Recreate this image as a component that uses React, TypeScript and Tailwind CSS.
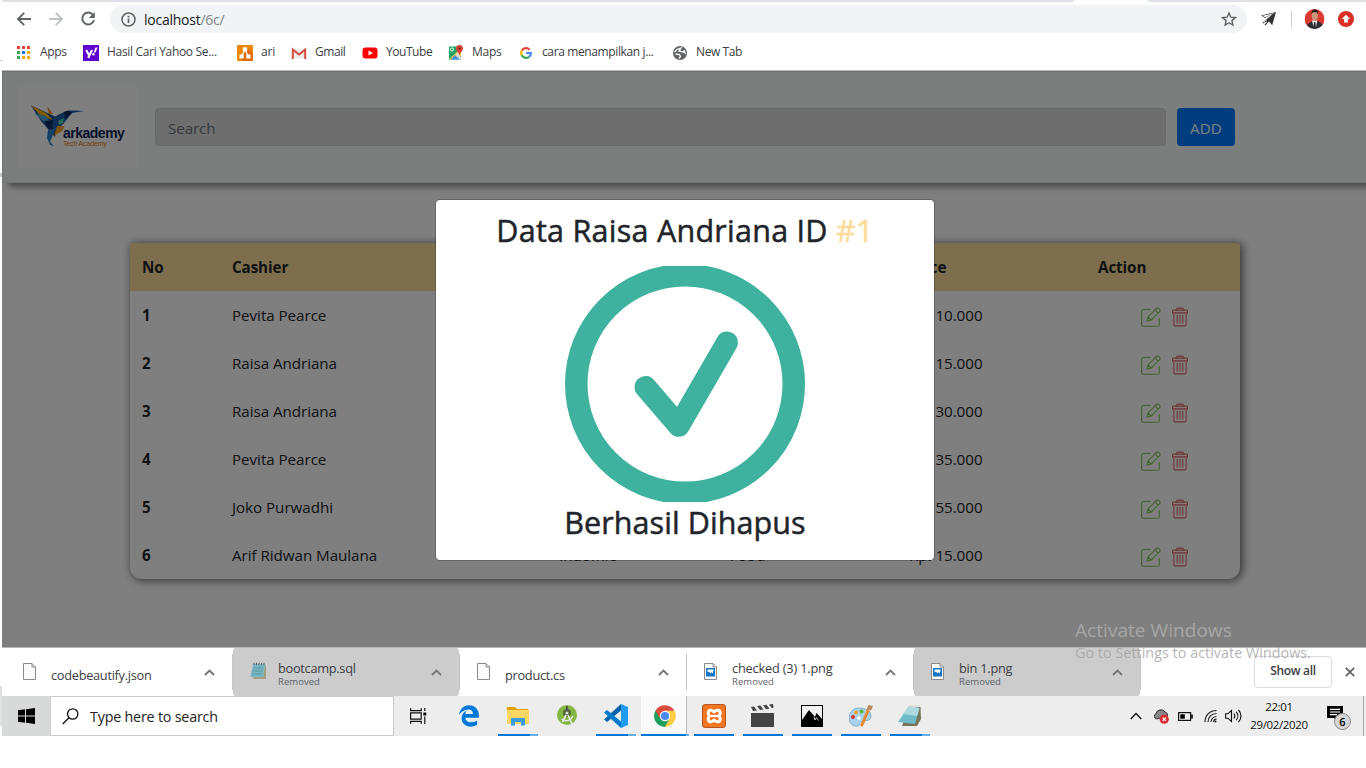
import React from "react";
import { FaEdgeLegacy } from "react-icons/fa6";

type Kid = { children?: React.ReactNode };

/* ---------- browser toolbar ---------- */

function Toolbar() {
  return (
    <div className="flex h-[35px] shrink-0 items-center pb-px pl-[14px]">
      <svg width="16" height="16" viewBox="0 0 16 16" fill="none" stroke="#5f6368" strokeWidth="1.9">
        <path d="M15 8H2.2M8.2 1.8 2 8l6.200 6.200" />
      </svg>
      <svg className="ml-4" width="16" height="16" viewBox="0 0 16 16" fill="none" stroke="#bdc1c6" strokeWidth="1.9">
        <path d="M1 8h12.800M7.800 1.800 14 8l-6.200 6.200" />
      </svg>
      <svg className="ml-4" width="16" height="16" viewBox="0 0 16 16" fill="none">
        <path d="M13.300 4.200A6 6 0 1 0 14 9.300" stroke="#5f6368" strokeWidth="2" />
        <path d="M14.800 1v6H8.800z" fill="#5f6368" />
      </svg>
      <div className="ml-[14px] flex h-7 w-[1137px] items-center rounded-full bg-[#f1f3f4] pl-[11px]">
        <svg width="15" height="15" viewBox="0 0 15 15" fill="none" stroke="#5f6368" strokeWidth="1.500">
          <circle cx="7.500" cy="7.500" r="6.500" />
          <path d="M7.500 6.500v4.500M7.500 3.800v1.600" strokeWidth="1.700" />
        </svg>
        <span className="ml-2 pt-px text-[14px] tracking-[-0.25px] text-[#202124]">
          localhost<span className="text-[#80868b]">/6c/</span>
        </span>
        <svg className="ml-auto mr-[10px]" width="16" height="16" viewBox="0 0 16 16" fill="none" stroke="#5f6368" strokeWidth="1.400">
          <path d="M8 2l1.800 4.200 4.600.4-3.500 3 1 4.500L8 11.700l-3.900 2.400 1-4.500-3.500-3 4.600-.4z" />
        </svg>
      </div>
      <svg className="ml-[13px]" width="17" height="16" viewBox="0 0 17 16">
        <path d="M16 1 1 4.500 5 7l8-4.200L6.200 8.500l.6 4L9 10.500l3.200 3.700z" fill="#333" />
        <path d="M15 2 2.500 4.800 5 6.200z" fill="#fff" />
        <path d="M5 9.500l1 1.500M3 12l1.500-1M5 14l2-2" stroke="#333" strokeWidth="1.100" />
      </svg>
      <div className="ml-[14px] h-4 w-px bg-[#c8cbcf]" />
      <svg className="ml-3" width="21" height="20" viewBox="0 0 20 20">
        <defs>
          <clipPath id="face"><circle cx="10" cy="10" r="10" /></clipPath>
        </defs>
        <g clipPath="url(#face)">
          <rect width="20" height="20" fill="#db3a33" />
          <path d="M3 20v-5l5-3h5l5 3v5z" fill="#2b2f36" />
          <path d="M7.300 11.500h5.500L11.500 18h-2z" fill="#eee" />
          <path d="M9.600 13h1.200l.6 5h-2.200z" fill="#222" />
          <ellipse cx="10.300" cy="6.800" rx="3.100" ry="4.600" fill="#c9987c" />
          <path d="M7 5.500C6.800 2 8 .6 10.300.6S14 2 13.600 5.500l-1-2.200H8z" fill="#1d1a1a" />
        </g>
      </svg>
      <svg className="ml-[13px]" width="16" height="16" viewBox="0 0 16 16">
        <circle cx="8" cy="8" r="8" fill="#d93025" />
        <path d="M8 3.800 12.200 8H10v3.500H6V8H3.800z" fill="#fff" />
      </svg>
    </div>
  );
}

function Mark({ width, icon, label, tracking }: { width: string; icon: React.ReactNode; label: string; tracking: string }) {
  return (
    <div className={`flex h-full shrink-0 items-center ${width}`}>
      <div className="flex w-6 shrink-0 items-center">{icon}</div>
      <span className={`whitespace-nowrap pb-0.5 text-[12px] text-[#3c4043] ${tracking}`}>{label}</span>
    </div>
  );
}

function Bookmarks() {
  const dots = ["#ea4335", "#ea4335", "#ea4335", "#34a853", "#1a73e8", "#fbaa05", "#34a853", "#fbaa05", "#fbaa05"];
  return (
    <div className="flex h-8 shrink-0 items-center pb-px pl-[15px]">
      <Mark
        width="w-[66px]"
        tracking="tracking-[-0.3px] -ml-px"
        label="Apps"
        icon={
          <svg width="13" height="13" viewBox="0 0 13 13">
            {dots.map((c, i) => (
              <rect key={i} x={(i % 3) * 5} y={Math.floor(i / 3) * 5} width="3" height="3" fill={c} />
            ))}
          </svg>
        }
      />
      <Mark
        width="w-[154px]"
        tracking="tracking-[-0.32px]"
        label="Hasil Cari Yahoo Se..."
        icon={
          <svg width="16" height="16" viewBox="0 0 16 16">
            <rect width="16" height="16" fill="#5f01d1" />
            <path d="M3.200 5 6 10.200M9 5l-3.800 8" stroke="#fff" strokeWidth="2.100" fill="none" />
            <path d="M12.500 2.500h2l-2 5h-2z" fill="#fff" />
            <circle cx="10.400" cy="9.300" r="1.200" fill="#fff" />
          </svg>
        }
      />
      <Mark
        width="w-[54px]"
        tracking="tracking-[-0.2px]"
        label="ari"
        icon={
          <svg width="16" height="16" viewBox="0 0 16 16">
            <rect width="16" height="16" rx="1" fill="#f08705" />
            <path d="M10 2 16 8v8H6l-3-3z" fill="#df6c0c" />
            <path d="M8 5 4.700 11M8 5l3.300 6" stroke="#fff" strokeWidth="1.200" />
            <rect x="5.800" y="2.300" width="4.400" height="4" fill="#fff" />
            <rect x="2.500" y="9.500" width="4.200" height="4" fill="#fff" />
            <rect x="9.300" y="9.500" width="4.200" height="4" fill="#fff" />
          </svg>
        }
      />
      <Mark
        width="w-[71px]"
        tracking="tracking-[-0.45px]"
        label="Gmail"
        icon={
          <svg width="16" height="16" viewBox="0 0 16 16">
            <path d="M1.500 3.500h13v10h-13z" fill="#ececec" />
            <path d="M1.800 14V4.500L8 9.500l6.200-5V14" stroke="#d54b3d" strokeWidth="2" fill="none" />
          </svg>
        }
      />
      <Mark
        width="w-[86px]"
        tracking="tracking-[-0.45px]"
        label="YouTube"
        icon={
          <svg width="16" height="16" viewBox="0 0 16 16">
            <rect x=".5" y="2.500" width="15" height="11" rx="3" fill="#f00" />
            <path d="M6.500 5.500v5L11 8z" fill="#fff" />
          </svg>
        }
      />
      <Mark
        width="w-[70px]"
        tracking="tracking-[-0.25px]"
        label="Maps"
        icon={
          <svg width="16" height="16" viewBox="0 0 16 16">
            <path d="M1 1.500h12v13H1z" fill="#1fa463" />
            <path d="M1 14.500 13 3v8z" fill="#f7d046" />
            <path d="M3 14.500 7 10l4.500 4.500z" fill="#4a89f3" />
            <path d="M10 7l4 7.500h-2.500L7.500 10z" fill="#dcdcdc" />
            <circle cx="4" cy="4.500" r="1.600" fill="none" stroke="#fff" strokeWidth=".9" />
            <path d="M11.500 0a3.500 3.500 0 0 1 3.500 3.500C15 6 12 7.500 11.500 10.500 11 7.500 8 6 8 3.500A3.500 3.500 0 0 1 11.500 0z" fill="#dc4437" />
            <circle cx="11.500" cy="3.500" r="1.200" fill="#80271d" />
          </svg>
        }
      />
      <Mark
        width="w-[154px]"
        tracking="tracking-[-0.38px]"
        label="cara menampilkan j..."
        icon={
          <svg className="ml-0.5" width="12" height="12" viewBox="0 0 14 14" fill="none" strokeWidth="2.500">
            <path d="M11.300 3.300A5.700 5.700 0 0 0 2 4.300" stroke="#ea4335" />
            <path d="M2.100 4.200a5.700 5.700 0 0 0 0 5.600" stroke="#fbbc05" />
            <path d="M2 9.700a5.700 5.700 0 0 0 8.600 1.800" stroke="#34a853" />
            <path d="M7.200 7h5.500a5.700 5.700 0 0 1-2 4.400" stroke="#4285f4" />
          </svg>
        }
      />
      <Mark
        width="w-[90px]"
        tracking="tracking-[-0.4px]"
        label="New Tab"
        icon={
          <svg className="ml-px" width="14" height="14" viewBox="0 0 14 14">
            <circle cx="7" cy="7" r="7" fill="#5f6368" />
            <path d="M1.500 6 4 3.500 8 2 6 5l4.500 1 1.500 1-1-3M2.500 8l4 .5 1 2-1.500 2" stroke="#fff" strokeWidth="1.300" fill="none" />
          </svg>
        }
      />
    </div>
  );
}

/* ---------- web page ---------- */

function ArkademyLogo() {
  return (
    <div className="relative h-[84px] w-[120px] shrink-0 bg-white">
      <svg className="absolute left-[11px] top-[19px]" width="58" height="46" viewBox="0 0 58 46">
        <path d="M1 1.500 24 12 29 17 25 33 11 17z" fill="#1d4f91" />
        <path d="M1 1.500 16 9 23 16 11 12z" fill="#ffb400" />
        <path d="M17 2l6 8-4 0z" fill="#ff8a1c" />
        <path d="M4 9l12 3 8 12-10-6z" fill="#4fa5e0" />
        <path d="M14 17l9-1 6 7-7 7z" fill="#0c2f66" />
        <path d="M24 13l12-6 6-.5L54 7l-12 2-8 10-8 8-4-4z" fill="#1d5ea8" />
        <path d="M34 8l5-1.500 3 2.500-7 6z" fill="#0b2b5c" />
        <path d="M28 17l6-3-1 5-4 2z" fill="#55d6b0" />
        <path d="M27 22h8l-3 5-8 5z" fill="#ffa01c" />
        <path d="M18 26l8-2-4 9-2 5 4 4-4-1-3-7z" fill="#2d83cf" />
      </svg>
      <div className="absolute left-[44px] top-[41px] font-['Liberation_Sans',sans-serif] text-[14px] font-bold leading-[14px] tracking-[-0.5px] text-[#0b2257]">
        arkademy
      </div>
      <div className="absolute left-[44px] top-[55px] whitespace-nowrap font-['Liberation_Sans',sans-serif] text-[7px] leading-[7px] tracking-[-0.15px] text-[#e57a10]">
        Tech Academy
      </div>
    </div>
  );
}

function PageHeader() {
  return (
    <header className="relative flex h-[112px] shrink-0 items-center border-y border-l border-[#e2e6e5] bg-[#f7fcfb] pl-4 shadow-[6px_5px_6px_-1px_rgba(0,0,0,0.42)]">
      <ArkademyLogo />
      <div className="ml-4 flex h-[38px] w-[1011px] items-center rounded-[4px] border border-[#ced4da] bg-[#dcdcdc] pl-3 pt-0.5 text-[15.200px] tracking-[-0.1px] text-[#6c757d]">
        Search
      </div>
      <button className="ml-[11px] h-[38px] w-[58px] rounded-[4px] bg-[#007bff] pt-0.5 text-[15.200px] tracking-[0.1px] text-white">ADD</button>
    </header>
  );
}

const cols = "grid grid-cols-[90px_327px_171px_179px_189px_154px] items-center h-12";

function Cell({ children }: Kid) {
  return <div className="whitespace-nowrap pl-3">{children}</div>;
}

const rows = [
  ["1", "Pevita Pearce", "Latte", "Drink", "Rp. 10.000"],
  ["2", "Raisa Andriana", "Cake", "Food", "Rp. 15.000"],
  ["3", "Raisa Andriana", "Gorengan", "Food", "Rp. 30.000"],
  ["4", "Pevita Pearce", "Fried Rice", "Food", "Rp. 35.000"],
  ["5", "Joko Purwadhi", "Steak", "Food", "Rp. 55.000"],
  ["6", "Arif Ridwan Maulana", "Indomie", "Food", "Rp. 15.000"],
];

function RowIcons() {
  return (
    <div className="flex items-center pl-[55px] pt-1">
      <svg width="20" height="20" viewBox="0 0 20 20" fill="none" stroke="#82c35a" strokeWidth="1.100">
        <path d="M10 2.500H2.200A1.500 1.500 0 0 0 .7 4v13.800a1.500 1.500 0 0 0 1.500 1.500H16.800a1.500 1.500 0 0 0 1.500-1.500V11" />
        <path d="M6 14l.9-4L15.300 1.400a1.700 1.700 0 0 1 2.500 0l.8.8a1.700 1.700 0 0 1 0 2.500L10 13.200zM14 2.800l3.300 3.300M7 10l3 3" />
      </svg>
      <svg className="ml-[11px]" width="16" height="20" viewBox="0 0 17 20" fill="none" stroke="#dd6464" strokeWidth="1.150">
        <path d="M5 2.700V1.500A.9.900 0 0 1 5.900.6h5.200a.9.900 0 0 1 .9.900v1.200M.6 5.600V3.700a1 1 0 0 1 1-1h13.800a1 1 0 0 1 1 1v1.900zM2 5.600v12.300a1.500 1.500 0 0 0 1.500 1.500h10a1.500 1.500 0 0 0 1.500-1.500V5.600M5.600 7.500v9.500M8.500 7.500v9.500M11.400 7.500v9.500" />
      </svg>
    </div>
  );
}

function CashierTable() {
  return (
    <div className="ml-32 mt-[60px] w-[1110px] rounded-b-[12px] rounded-t-[4px] bg-white text-[15.200px] text-[#212529] shadow-[2px_1px_9px_1px_rgba(0,0,0,0.55)]">
      <div className={`${cols} rounded-t-[3px] bg-[#fbdc9a] font-bold tracking-[-0.1px]`}>
        <Cell>No</Cell>
        <Cell>Cashier</Cell>
        <Cell />
        <Cell />
        <Cell>Price</Cell>
        <Cell>Action</Cell>
      </div>
      {rows.map((r) => (
        <div key={r[0]} className={`${cols} tracking-[-0.05px]`}>
          <div className="pl-3 font-bold">{r[0]}</div>
          <Cell>{r[1]}</Cell>
          <Cell>{r[2]}</Cell>
          <Cell>{r[3]}</Cell>
          <Cell>{r[4]}</Cell>
          <RowIcons />
        </div>
      ))}
    </div>
  );
}

function DeletedDialog() {
  return (
    <div className="absolute left-[433px] top-[128px] flex h-[362px] w-[500px] flex-col items-center rounded-[5px] border border-black/20 bg-white bg-clip-padding pt-[11px] text-[30.500px] font-medium leading-[38px] text-[#212529] [-webkit-text-stroke:0.5px]">
      <div className="whitespace-nowrap tracking-[0.26px]">
        Data Raisa Andriana ID <span className="text-[#fbdc9a]">#1</span>
      </div>
      <svg className="mt-[17px] shrink-0" width="240" height="236" viewBox="0 2 240 236" fill="none" stroke="#3eb29e" strokeWidth="22.500">
        <circle cx="120" cy="120" r="108.750" />
        <path d="M80.500 123 113.800 161.800 162 78.500" strokeWidth="22" strokeLinecap="round" strokeLinejoin="round" />
      </svg>
      <div className="mt-px whitespace-nowrap tracking-[0.08px]">Berhasil Dihapus</div>
    </div>
  );
}

function WebPage() {
  return (
    <main className="relative flex h-[577px] shrink-0 flex-col overflow-hidden border-t border-[#b5b8bb] bg-white">
      <PageHeader />
      <CashierTable />
      <div className="absolute inset-0 bg-black/50" />
      <DeletedDialog />
    </main>
  );
}

/* ---------- downloads ---------- */

function FileIcon({ picture }: { picture?: boolean }) {
  return (
    <svg width="13" height="17" viewBox="0 0 13 17">
      <path d="M.5.5h8.500l3.500 3.500v12.500H.5z" fill={picture ? "#fff" : "#fafafa"} stroke="#8a8a8a" />
      <path d="M9 .5v3.500h3.500" fill="none" stroke="#8a8a8a" />
      {picture && (
        <>
          <rect x="2" y="5" width="9" height="8.500" fill="#1474c4" />
          <path d="M3.500 6.500h6v1L8.800 10.500 7.500 9 6.500 10.500 5 8.500l-1.500 1z" fill="#fff" />
        </>
      )}
    </svg>
  );
}

function NotepadIcon() {
  return (
    <svg width="17" height="18" viewBox="0 0 17 18">
      <path d="M5 3h11v14H3z" fill="#a59f80" />
      <path d="M3 2h12l-1.500 13H.5z" fill="#79b5c2" />
      <path d="M3 6h10M2.500 9h10M2 12h10" stroke="#5796a5" strokeWidth=".8" />
      <path d="M4 .8v2M6.500.8v2M9 .8v2M11.500.8v2M14 .8v2" stroke="#555" strokeWidth="1" />
    </svg>
  );
}

type DownloadProps = { icon: React.ReactNode; name: string; removed?: boolean; hover?: boolean; width: string; pad: string; tracking: string };

function Download({ icon, name, removed, hover, width, pad, tracking }: DownloadProps) {
  return (
    <div className={`flex h-12 shrink-0 items-center ${width} ${hover ? "rounded-[3px] bg-[#ccc]" : ""}`}>
      <div className={`flex w-full items-center ${pad}`}>
        <div className="mb-[2px] w-7 shrink-0">{icon}</div>
        <div className={removed ? "pt-[3px]" : "pt-[6px]"}>
          <div className={`whitespace-nowrap text-[12.800px] leading-[15px] text-[#3c4043] ${tracking}`}>{name}</div>
          {removed && <div className="text-[9.500px] leading-[11px] tracking-[0.05px] text-[#5f6368]">Removed</div>}
        </div>
        <svg className="ml-auto mr-[17px]" width="11" height="7" viewBox="0 0 11 7" fill="none" stroke="#777" strokeWidth="1.900">
          <path d="M1 6l4.500-4.500L10 6" />
        </svg>
      </div>
    </div>
  );
}

function Sep() {
  return <div className="h-9 w-px shrink-0 bg-[#c4c4c4]" />;
}

function Downloads() {
  return (
    <div className="flex h-[49px] shrink-0 items-center border-t border-[#b9b9b9] bg-white">
      <Download width="w-[230px]" pad="pl-[21px]" tracking="tracking-[-0.3px]" icon={<FileIcon />} name="codebeautify.json" />
      <Sep />
      <Download hover removed width="w-[226px]" pad="pl-[17px]" tracking="tracking-[-0.3px]" icon={<NotepadIcon />} name="bootcamp.sql" />
      <Sep />
      <Download width="w-[226px]" pad="pl-[17px]" tracking="tracking-[-0.3px]" icon={<FileIcon />} name="product.cs" />
      <Sep />
      <Download removed width="w-[226px]" pad="pl-[17px]" tracking="tracking-[-0.2px]" icon={<FileIcon picture />} name="checked (3) 1.png" />
      <Sep />
      <Download hover removed width="w-[226px]" pad="pl-[17px]" tracking="tracking-[-0.25px]" icon={<FileIcon picture />} name="bin 1.png" />
      <Sep />
      <div className="ml-[113px] flex h-8 w-[78px] shrink-0 items-center justify-center rounded-[4px] border border-[#dadce0] pb-0.5 text-[12px] font-semibold tracking-[-0.3px] text-[#3c4043]">
        Show all
      </div>
      <svg className="ml-[13px] shrink-0" width="10" height="10" viewBox="0 0 10 10" stroke="#666" strokeWidth="1.800">
        <path d="M.8.8l8.400 8.400M9.200.8.800 9.200" />
      </svg>
    </div>
  );
}

/* ---------- taskbar ---------- */

function Task({ children, bar, tail }: Kid & { bar?: boolean; tail?: boolean }) {
  return (
    <div className="flex h-10 w-[49px] shrink-0 flex-col items-center">
      <div className="flex h-[38px] items-center justify-center pt-0.5">{children}</div>
      {bar && (
        <div className="flex h-0.5 w-10">
          <div className="grow bg-[#0078d7]" />
          {tail && <div className="w-2 bg-[#66aee7]" />}
        </div>
      )}
    </div>
  );
}

function Taskbar() {
  return (
    <div className="flex h-10 shrink-0 items-stretch bg-[#ededed]">
      <div className="flex w-12 shrink-0 items-center justify-center bg-[#d8dada]">
        <svg width="17" height="16" viewBox="0 0 17 16">
          <path d="M0 2.300 7 1.300v6.200H0zM8 1.200 17 0v7.500H8zM0 8.500h7v6.200l-7-1zM8 8.500h9V16L8 14.800z" />
        </svg>
      </div>
      <div className="flex w-[344px] shrink-0 items-center border border-[#ccc] bg-white pl-[11px]">
        <svg width="17" height="17" viewBox="0 0 17 17" fill="none" stroke="#111" strokeWidth="1.300">
          <circle cx="10.700" cy="6" r="5.200" />
          <path d="M7 9.700.7 16" />
        </svg>
        <span className="ml-[11px] pt-px text-[14.300px] tracking-[-0.2px] text-[#222]">Type here to search</span>
      </div>
      <div className="flex w-[50px] shrink-0 items-center justify-center pr-0.5">
        <svg width="17" height="16" viewBox="0 0 17 16" fill="none" stroke="#111" strokeWidth="1.200">
          <path d="M.6.3v2.300h10.600V.3M.6 15.700v-2.300h10.600v2.300M.6 4.800h10.600v6.400H.6zM14.800 0v3M14.800 8.500V16" />
          <rect x="13.300" y="4.500" width="3" height="3" fill="#111" stroke="none" />
        </svg>
      </div>
      <Task><FaEdgeLegacy size={22} color="#0078d7" /></Task>
      <Task bar tail>
        <svg width="22" height="20" viewBox="0 0 22 20">
          <path d="M0 1h8l2 2h11v5H0z" fill="#dfa000" />
          <path d="M0 4h22v14H0z" fill="#fdd663" />
          <path d="M4 19.500V12h14v7.500h-4V16H8v3.500z" fill="#3d9be0" />
        </svg>
      </Task>
      <Task>
        <svg width="20" height="22" viewBox="0 0 20 22">
          <circle cx="10" cy="10" r="10" fill="#84b741" />
          <circle cx="10" cy="8" r="4" fill="#4f6a35" />
          <path d="M9 1h2v6H9z" fill="#555" />
          <path d="M9 10 5.500 17M11 10l4.500 10" stroke="#e8e8e8" strokeWidth="1.700" />
          <path d="M4.500 14c3 3 8.500 2.500 11.500-3" stroke="#e8e8e8" strokeWidth="1.500" fill="none" />
          <circle cx="10" cy="8" r="1.500" fill="#ddd" />
        </svg>
      </Task>
      <Task bar tail>
        <svg width="24" height="24" viewBox="0 0 24 24">
          <path d="M17 0v6.500L3 18 0 15.500z" fill="#0065a9" />
          <path d="M17 24v-6.500L3 6 0 8.500z" fill="#007acc" />
          <path d="M17 0l7 3v18l-7 3z" fill="#1f9cf0" />
        </svg>
      </Task>
      <div className="ml-px flex w-12 shrink-0 flex-col items-start">
        <div className="flex h-[38px] w-[46px] items-center justify-center border-r border-[#bbb] bg-[#fafafa] pl-0.5 pt-0.5">
          <svg width="22" height="22" viewBox="0 0 22 22">
            <path d="M1.500 5.500A11 11 0 0 0 11 22l4.800-8.300L11 11z" fill="#1da05d" />
            <path d="M11 22A11 11 0 0 0 20.500 5.800H11l4.800 7.900z" fill="#fdcd42" />
            <path d="M1.500 5.500 6.300 13.800 11 5.800h9.500A11 11 0 0 0 1.500 5.500z" fill="#dd4b3e" />
            <circle cx="11" cy="11" r="5.200" fill="#fff" />
            <circle cx="11" cy="11" r="4.100" fill="#4a89f3" />
          </svg>
        </div>
        <div className="flex h-0.5 w-12">
          <div className="grow bg-[#0078d7]" />
          <div className="w-[3px] bg-[#66aee7]" />
        </div>
      </div>
      <Task bar>
        <svg width="24" height="24" viewBox="0 0 24 24">
          <rect x=".5" y=".5" width="23" height="23" rx="2.500" fill="#f37623" stroke="#b8571a" />
          <path d="M7.500 6.500c2.500-1 3.500.5 4.500 1.500 1-1 2.500-2.500 5-1.500 2 1.500 1.500 4-.5 5.500 2 1.500 2.500 4 .5 5.500-2.500 1-4-.5-5-1.500-1 1-2 2.500-4.500 1.500-2-1.500-1.500-4 0-5.500-1.500-1.500-2-4 0-5.500z" fill="none" stroke="#fff" strokeWidth="3" strokeLinejoin="round" />
          <path d="M9 12h6" stroke="#fff" strokeWidth="2.200" />
        </svg>
      </Task>
      <Task bar>
        <svg width="23" height="24" viewBox="0 0 23 24" fill="#444">
          <path d="M0 9h23v14H0zM0 3l3-.5 3 4L2 7zM6 2l3.500-.5 3 4-3.500.5zM12 1.200l3.500-.5 3 4-3.500.5zM18 .5l4-.5.5 3.500-1.500.7z" />
        </svg>
      </Task>
      <Task bar>
        <svg width="22" height="22" viewBox="0 0 22 22">
          <rect x=".5" y=".5" width="21" height="21" fill="#f2f2f2" stroke="#000" />
          <path d="M1 15 8 5l6 7 1.500-4L21 14v7.500H1z" />
          <path d="M13 12l1 3 1.500-2.500 2 3" stroke="#f2f2f2" strokeWidth=".8" fill="none" />
        </svg>
      </Task>
      <Task bar>
        <svg width="24" height="24" viewBox="0 0 24 24">
          <path d="M10 4C4 4 0 9 0 14s4 9 9 8c3-.5 1-4 4-5s9 1 9-5-6-8-12-8z" fill="#a9d3ec" stroke="#6e9ebc" strokeWidth=".7" />
          <circle cx="4" cy="13" r="2" fill="#d9342b" />
          <circle cx="7" cy="8.500" r="2" fill="#f3a21d" />
          <circle cx="12.500" cy="7.500" r="2" fill="#5bb53c" />
          <circle cx="10" cy="14" r="1.800" fill="#fff" />
          <path d="M20 4 13 21" stroke="#e38a34" strokeWidth="3" strokeLinecap="round" />
          <path d="M18 5l1.500-4L24 2l-2 4.500z" fill="#b88b5e" />
        </svg>
      </Task>
      <Task bar tail>
        <svg width="24" height="22" viewBox="0 0 24 22">
          <path d="M11 2h11.500l.5 12-4 7H4z" fill="#77735c" />
          <path d="M11 1 21.500 3 17 19 0 17z" fill="#6fbac8" />
          <path d="M11 1 21.500 3 19 11 5 9z" fill="#add9df" />
          <path d="M11 1h11" stroke="#ddd" strokeWidth="1.500" />
        </svg>
      </Task>
      <div className="ml-auto flex shrink-0 items-center">
        <svg width="12" height="8" viewBox="0 0 12 8" fill="none" stroke="#111" strokeWidth="1.300">
          <path d="M.7 7 6 1.500 11.300 7" />
        </svg>
        <svg className="ml-[11px]" width="16" height="15" viewBox="0 0 16 15">
          <path d="M3.500 10A3 3 0 0 1 3 4.500 5 5 0 0 1 12 3a3.500 3.500 0 0 1 2.500 4z" fill="#888" stroke="#333" />
          <circle cx="11.200" cy="10.200" r="4.600" fill="#dc2c33" />
          <path d="M9.600 8.600l3.200 3.200M12.800 8.600l-3.200 3.200" stroke="#fff" strokeWidth="1.300" />
        </svg>
        <svg className="ml-[9px]" width="15" height="9" viewBox="0 0 15 9">
          <rect x=".6" y=".6" width="12" height="7.800" fill="none" stroke="#111" strokeWidth="1.200" />
          <rect x="2.300" y="2.300" width="4.500" height="4.400" />
          <rect x="13.200" y="2.500" width="1.600" height="4" />
        </svg>
        <svg className="ml-[11px]" width="13" height="14" viewBox="0 0 13 14" fill="none" stroke="#222" strokeWidth="1.200">
          <path d="M1 13C1 6 6 1.500 12.500 1.500M4 13c0-5 3.500-8.500 8.500-8.500M7 13c0-3 2.500-5.500 5.500-5.500M9.700 13c0-1.500 1-2.800 2.800-2.800" />
          <circle cx="11.500" cy="12.500" r="1" fill="#222" stroke="none" />
        </svg>
        <svg className="ml-2" width="17" height="14" viewBox="0 0 17 14" fill="none" stroke="#111" strokeWidth="1.100">
          <path d="M.6 4.800h2.200L6.500 1.500v11L2.800 9.200H.6zM8.800 4.500c1.200 1.400 1.200 3.600 0 5M11.200 2.800c2.200 2.400 2.200 6 0 8.400M13.500 1c3.300 3.500 3.300 8.500 0 12" />
        </svg>
        <div className="ml-[7px] w-[60px] text-center text-[11.500px] leading-[18px] tracking-[-0.35px] text-[#111]">
          <div>22:01</div>
          <div className="whitespace-nowrap">29/02/2020</div>
        </div>
        <div className="relative ml-[18px] mt-1 h-6 w-6">
          <svg width="24" height="24" viewBox="0 0 24 24">
            <path d="M0 0h16v12h-5v4l-4-4H0z" />
            <path d="M3 3.300h10M3 6h10M3 8.700h7" stroke="#fff" strokeWidth="1.200" />
            <circle cx="15.500" cy="15.500" r="8" fill="#d5d5d5" stroke="#888" />
          </svg>
          <span className="absolute left-[8px] top-[7px] w-[15px] text-center text-[11px] font-semibold leading-[17px] text-black">6</span>
        </div>
        <div className="ml-3 h-10 w-px bg-[#aaa]" />
        <div className="w-0.5" />
      </div>
    </div>
  );
}

export default function App() {
  return (
    <div className="relative flex h-[768px] w-[1366px] overflow-hidden bg-white font-['Open_Sans','Noto_Sans',sans-serif]">
      <div className="flex w-0.5 shrink-0 flex-col">
        <div className="mt-[60px] h-px bg-[#c8c8c8]" />
        <div className="mt-[112px] h-1 bg-[#c8c8c8]" />
        <div className="mt-[509px] h-10 bg-[#e0e0e0]" />
      </div>
      <div className="flex w-[1364px] shrink-0 flex-col">
        <div className="flex h-0.5 shrink-0">
          <div className="w-[1072px] rounded-br-[2px] bg-[#dee1e6]" />
          <div className="w-[74px]" />
          <div className="grow rounded-bl-[2px] bg-[#dee1e6]" />
        </div>
        <Toolbar />
        <Bookmarks />
        <div className="h-px shrink-0" />
        <WebPage />
        <Downloads />
        <Taskbar />
      </div>
      <div className="pointer-events-none absolute left-[1075px] top-[617px] whitespace-nowrap text-[#a6a6a6]">
        <div className="text-[19px] leading-[26px] tracking-[0.05px]">Activate Windows</div>
        <div className="text-[14.300px] leading-[19px] tracking-[0.05px] text-[#a6a6a6]/85">Go to Settings to activate Windows.</div>
      </div>
    </div>
  );
}
